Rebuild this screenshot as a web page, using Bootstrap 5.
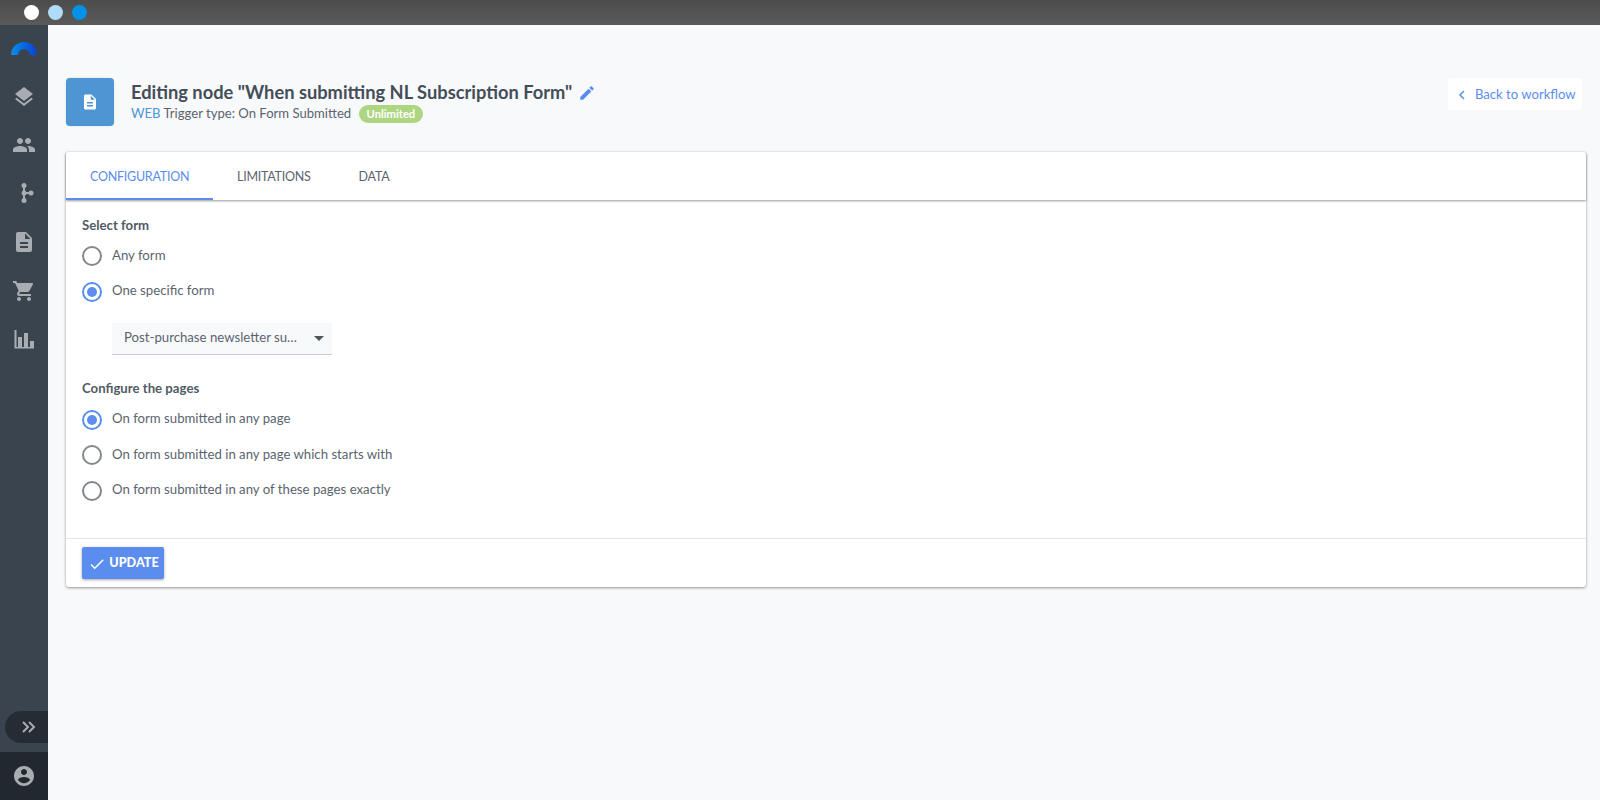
<!DOCTYPE html>
<html lang="en">
<head>
<meta charset="utf-8">
<title>Editing node</title>
<link href="https://cdn.jsdelivr.net/npm/bootstrap@5.3.0/dist/css/bootstrap.min.css" rel="stylesheet">
<style>
html,body{height:100%;overflow:hidden}
body{font-family:"Lato","Noto Sans","Liberation Sans",sans-serif;background:#f8f9fb;color:#5b646e;font-size:13.2px}
.topbar{height:25px;background:linear-gradient(#4c4c4c,#5a5a5a);padding-left:24px;gap:9px}
.dot{width:15px;height:15px;border-radius:50%}
.dot-a{background:#fff}.dot-b{background:#b0dcf7}.dot-c{background:#0092e6}
.shell{height:775px}
.side{width:48px;background:#3a444e;flex:none}
.logo-box{height:47px}
.side-ico{height:48.6px;color:#a9adb1}
.side-ico svg{width:24px;height:24px;fill:currentColor}
.side-ico.first-ico{padding-top:2px}
.pill-row{height:32px;margin-bottom:9px;padding-left:5px}
.pill{background:#252c34;border-radius:16px 0 0 16px;color:#a9adb1;padding-left:4px}
.user-box{height:48px;background:#212830;color:#a9adb1}
.user-box svg{width:24px;height:24px;fill:currentColor}
.main-pane{padding:53px 14px 0 18px;min-width:0}
.head-row{height:74px}
.node-ico{width:48px;height:48px;background:#4e95d3;border-radius:4px;margin-right:17px;color:#fff;box-shadow:0 0 2px rgba(0,0,0,.15)}
.node-ico svg{width:18px;height:18px;fill:currentColor}
.head-text{padding-top:2px}
.ttl{font-size:18.3px;font-weight:700;color:#444e58;line-height:24px}
.ttl svg{width:18px;height:18px;fill:#5b8def;margin-left:6px;vertical-align:-3px}
.sub{font-size:13.1px;line-height:18px;color:#5b646e}
.web{color:#4e95d3}
.lim{background:#aed581;color:#fff;font-size:11.2px;font-weight:700;border-radius:9px;padding:0 8px;line-height:18px;margin-left:4px;display:inline-block}
.back-btn{background:#fff;color:#5b8def;font-size:13.1px;height:32px;width:134px;border-radius:2px;padding:2px 0 0 10px;margin-right:4px;gap:9px;text-decoration:none;white-space:nowrap}
.back-btn svg{width:8px;height:12px;flex:none}
.panel{border:0;border-radius:3px;background:#fff;box-shadow:0 1px 3px rgba(0,0,0,.4);height:435px}
.tabbar{height:48px;box-shadow:0 1px 2px rgba(0,0,0,.4);position:relative}
.tabbar a{color:#5b646e;font-size:12.5px;letter-spacing:-.25px;height:48px;padding:2px 24px 0;display:flex;align-items:center;text-decoration:none}
.tabbar a.on{color:#5b8def;border-bottom:2px solid #5b8def;width:147px;padding-top:4px}
.panel-body{padding:16px 16px 0;flex:1}
.lbl{font-weight:700;color:#515b65;line-height:18px;margin-bottom:4px}
.sel + .lbl{margin-bottom:5px}
.radio-row{height:35.5px;gap:10px;margin:0}
.rad{width:20px;height:20px;border-radius:50%;border:2px solid #84888c;flex:none;margin-top:1px}
.rad.on{border-color:#5b8def;display:flex;align-items:center;justify-content:center}
.rad.on::after{content:"";width:10px;height:10px;border-radius:50%;background:#5b8def}
.sel{width:220px;height:32px;background:#f8f9fb;border-bottom:1px solid #c9ccd1;margin:13.5px 0 24px 30px;padding:0 8px 0 12px}
.sel .arr{width:0;height:0;border-left:5px solid transparent;border-right:5px solid transparent;border-top:5px solid #4c5660}
.panel-foot{height:49px;border-top:1px solid #e3e4e6;padding:8px 16px}
.go{background:#5b8def;color:#fff;font-weight:900;font-size:12.6px;height:32px;width:82px;border:0;border-radius:2px;padding:1px 0 0 1px;gap:3px;box-shadow:0 1px 3px rgba(0,0,0,.35)}
.go:hover{background:#5b8def;color:#fff}
.go svg{width:18px;height:18px;fill:#fff}
</style>
</head>
<body>
<div class="topbar d-flex align-items-center">
<span class="dot dot-a"></span><span class="dot dot-b"></span><span class="dot dot-c"></span>
</div>
<div class="shell d-flex">
<nav class="side d-flex flex-column">
<div class="logo-box d-flex justify-content-center align-items-start">
<svg width="28" height="16" viewBox="0 0 28 16" class="mt-3"><defs><linearGradient id="lg" x1="0" x2="1"><stop offset="0" stop-color="#0a8fe8"/><stop offset="1" stop-color="#0740d8"/></linearGradient></defs><path d="M1 14a13 13 0 0 1 26 0h-7a6 6 0 0 0-12 0z" fill="url(#lg)"/></svg>
</div>
<div class="side-ico first-ico d-flex align-items-center justify-content-center"><svg viewBox="0 0 24 24"><path d="M11.99 18.54l-7.37-5.73L3 14.07l9 7 9-7-1.63-1.27-7.38 5.74zM12 16l7.36-5.73L21 9l-9-7-9 7 1.63 1.27L12 16z"/></svg></div>
<div class="side-ico d-flex align-items-center justify-content-center"><svg viewBox="0 0 24 24"><path d="M16 11c1.66 0 2.99-1.34 2.99-3S17.66 5 16 5c-1.66 0-3 1.34-3 3s1.34 3 3 3zm-8 0c1.66 0 2.99-1.34 2.99-3S9.66 5 8 5C6.34 5 5 6.34 5 8s1.34 3 3 3zm0 2c-2.33 0-7 1.17-7 3.5V19h14v-2.5c0-2.33-4.67-3.5-7-3.5zm8 0c-.29 0-.62.02-.97.05 1.16.84 1.97 1.97 1.97 3.45V19h6v-2.5c0-2.33-4.67-3.5-7-3.5z"/></svg></div>
<div class="side-ico d-flex align-items-center justify-content-center"><svg viewBox="0 0 24 24"><circle cx="12" cy="4.500" r="2.500"/><circle cx="12" cy="12" r="2.500"/><circle cx="12" cy="19.500" r="2.500"/><circle cx="19" cy="12" r="2.500"/><rect x="11" y="4" width="2" height="16"/><rect x="12" y="11" width="7" height="2"/></svg></div>
<div class="side-ico d-flex align-items-center justify-content-center"><svg viewBox="0 0 24 24"><path d="M14 2H6c-1.1 0-1.99.9-1.99 2L4 20c0 1.1.89 2 1.99 2H18c1.1 0 2-.9 2-2V8l-6-6zm2 16H8v-2h8v2zm0-4H8v-2h8v2zm-3-5V3.5L18.5 9H13z"/></svg></div>
<div class="side-ico d-flex align-items-center justify-content-center"><svg viewBox="0 0 24 24"><path d="M7 18c-1.1 0-1.99.9-1.99 2S5.9 22 7 22s2-.9 2-2-.9-2-2-2zM1 2v2h2l3.6 7.59-1.35 2.45c-.16.28-.25.61-.25.96 0 1.1.9 2 2 2h12v-2H7.42c-.14 0-.25-.11-.25-.25l.03-.12.9-1.63h7.45c.75 0 1.41-.41 1.75-1.03l3.58-6.49c.08-.14.12-.31.12-.48 0-.55-.45-1-1-1H5.21l-.94-2H1zm16 16c-1.1 0-1.99.9-1.99 2s.89 2 1.99 2 2-.9 2-2-.9-2-2-2z"/></svg></div>
<div class="side-ico d-flex align-items-center justify-content-center"><svg viewBox="0 0 24 24"><path d="M2.500 3h2v17h1.500V10h4v10h2V6h4v14h2v-6h4v7.500H2.500z"/></svg></div>
<div class="flex-grow-1"></div>
<div class="pill-row d-flex"><div class="pill flex-grow-1 d-flex align-items-center justify-content-center"><svg width="16" height="14" viewBox="0 0 16 14" fill="none" stroke="currentColor" stroke-width="2"><path d="M2 2l5 5-5 5M8 2l5 5-5 5"/></svg></div></div>
<div class="user-box d-flex align-items-center justify-content-center"><svg viewBox="0 0 24 24"><path d="M12 2C6.48 2 2 6.48 2 12s4.48 10 10 10 10-4.48 10-10S17.52 2 12 2zm0 3c1.66 0 3 1.34 3 3s-1.34 3-3 3-3-1.34-3-3 1.34-3 3-3zm0 14.2c-2.5 0-4.71-1.28-6-3.22.03-1.99 4-3.08 6-3.08 1.99 0 5.97 1.09 6 3.08-1.29 1.94-3.5 3.22-6 3.22z"/></svg></div>
</nav>
<main class="main-pane flex-grow-1">
<div class="head-row d-flex align-items-start">
<div class="node-ico d-flex align-items-center justify-content-center"><svg viewBox="0 0 24 24"><path d="M14 2H6c-1.1 0-1.99.9-1.99 2L4 20c0 1.1.89 2 1.99 2H18c1.1 0 2-.9 2-2V8l-6-6zm2 16H8v-2h8v2zm0-4H8v-2h8v2zm-3-5V3.500L18.500 9H13z"/></svg></div>
<div class="head-text flex-grow-1">
<div class="ttl">Editing node "When submitting NL Subscription Form"<svg viewBox="0 0 24 24"><path d="M3 17.25V21h3.75L17.81 9.94l-3.75-3.75L3 17.25zM20.71 7.04c.39-.39.39-1.02 0-1.41l-2.34-2.34c-.39-.39-1.02-.39-1.41 0l-1.83 1.83 3.75 3.75 1.83-1.83z"/></svg></div>
<div class="sub"><span class="web">WEB</span> Trigger type: On Form Submitted <span class="lim">Unlimited</span></div>
</div>
<a href="#" class="back-btn d-flex align-items-center"><svg viewBox="0 0 8 12" fill="none" stroke="#5b8def" stroke-width="1.500"><path d="M6 2L2 6l4 4"/></svg>Back to workflow</a>
</div>
<section class="panel card d-flex flex-column">
<div class="tabbar d-flex">
<a href="#" class="on">CONFIGURATION</a><a href="#">LIMITATIONS</a><a href="#">DATA</a>
</div>
<div class="panel-body">
<div class="lbl">Select form</div>
<div class="radio-row d-flex align-items-center"><span class="rad"></span><span>Any form</span></div>
<div class="radio-row d-flex align-items-center"><span class="rad on"></span><span>One specific form</span></div>
<div class="sel d-flex align-items-center justify-content-between"><span>Post-purchase newsletter su…</span><span class="arr"></span></div>
<div class="lbl">Configure the pages</div>
<div class="radio-row d-flex align-items-center"><span class="rad on"></span><span>On form submitted in any page</span></div>
<div class="radio-row d-flex align-items-center"><span class="rad"></span><span>On form submitted in any page which starts with</span></div>
<div class="radio-row d-flex align-items-center"><span class="rad"></span><span>On form submitted in any of these pages exactly</span></div>
</div>
<div class="panel-foot"><button type="button" class="btn go d-flex align-items-center justify-content-center"><svg viewBox="0 0 24 24"><path d="M9 16.170L4.830 12l-1.420 1.410L9 19 21 7l-1.410-1.410z"/></svg>UPDATE</button></div>
</section>
</main>
</div>
</body>
</html>
